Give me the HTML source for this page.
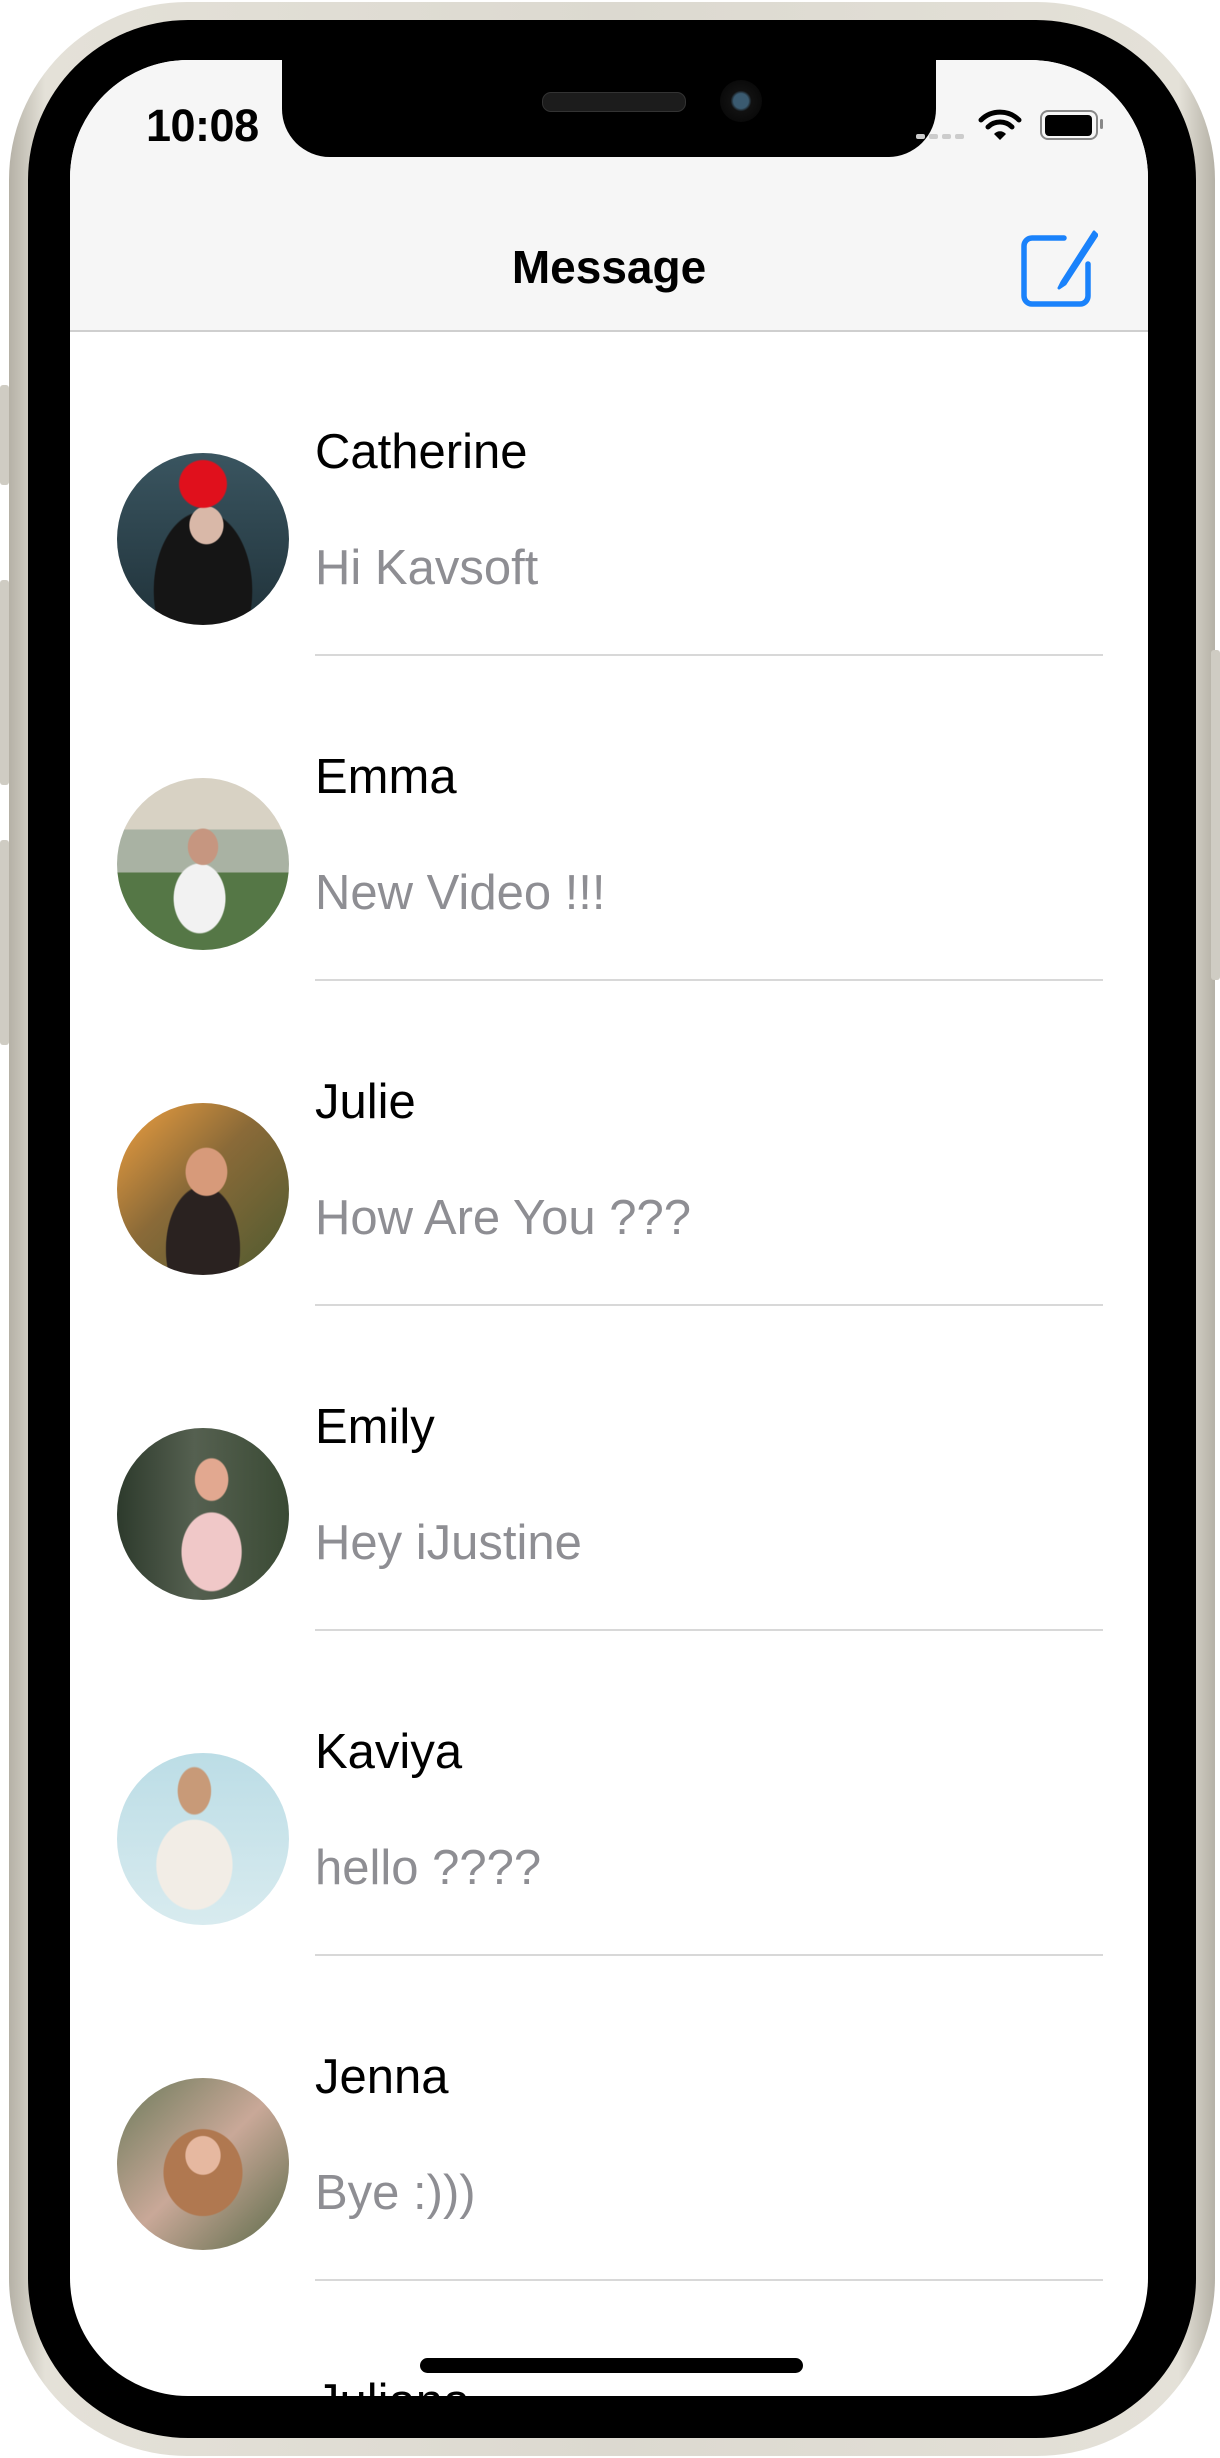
<!DOCTYPE html>
<html><head><meta charset="utf-8"><style>
html,body{margin:0;padding:0;background:#fff;}
body{width:1220px;height:2458px;position:relative;overflow:hidden;font-family:"Liberation Sans",sans-serif;}
.frame{position:absolute;left:9px;top:2px;width:1206px;height:2454px;border-radius:178px;background:linear-gradient(90deg,#b5b1a6,#e4e1d8 3%,#dcd9d0 50%,#e4e1d8 97%,#b5b1a6);}
.bezel{position:absolute;left:28px;top:20px;width:1168px;height:2418px;border-radius:160px;background:#000;}
.screen{position:absolute;left:70px;top:60px;width:1078px;height:2336px;border-radius:118px;background:#fff;overflow:hidden;}
.nav{position:absolute;left:0;top:0;width:100%;height:270px;background:#f6f6f6;border-bottom:2px solid #cfcfcf;}
.notch{position:absolute;left:212px;top:-2px;width:654px;height:99px;background:#000;border-radius:0 0 48px 48px;}
.title{position:absolute;left:0;width:100%;top:180px;text-align:center;font-size:46px;font-weight:bold;color:#000;}
.time{position:absolute;left:76px;top:40px;font-size:45px;font-weight:bold;color:#000;letter-spacing:-0.5px;}
.row{position:absolute;left:0;width:100%;height:325px;}
.av{position:absolute;left:47px;width:172px;height:172px;border-radius:50%;}
.name{position:absolute;left:245px;font-size:49px;color:#000;}
.msg{position:absolute;left:245px;font-size:49px;color:#8e8e93;}
.sep{position:absolute;left:245px;width:788px;height:2px;background:#d8d8d8;}
.home{position:absolute;left:350px;top:2298px;width:383px;height:15px;border-radius:8px;background:#000;}
.btn{position:absolute;left:0;width:9px;background:#cfccc3;border-radius:3px;}
</style></head><body>
<div class="frame"></div>
<div class="btn" style="top:385px;height:100px"></div>
<div class="btn" style="top:580px;height:205px"></div>
<div class="btn" style="top:840px;height:205px"></div>
<div class="btn" style="left:1211px;top:650px;height:330px"></div>
<div class="bezel"></div>
<div class="screen">
  <div class="nav"></div>
  <div class="notch"></div>
  <div style="position:absolute;left:472px;top:32px;width:142px;height:18px;border-radius:9px;background:#1c1c1c;border:1px solid #333"></div>
  <div style="position:absolute;left:650px;top:20px;width:42px;height:42px;border-radius:50%;background:radial-gradient(circle,#3a5a70 0 25%,#111 35%,#0a0a0a 70%)"></div>
  <div class="time">10:08</div>
  <div style="position:absolute;left:846px;top:74px;width:48px;height:5px;display:flex;gap:4px">
    <span style="flex:1;background:#ccc;border-radius:2px"></span><span style="flex:1;background:#ccc;border-radius:2px"></span><span style="flex:1;background:#ccc;border-radius:2px"></span><span style="flex:1;background:#ccc;border-radius:2px"></span>
  </div>
  <svg style="position:absolute;left:908px;top:48px" width="44" height="34" viewBox="0 0 44 34">
    <path d="M3 12 A27 27 0 0 1 41 12" stroke="#000" stroke-width="5" fill="none" stroke-linecap="round"/>
    <path d="M10 19 A17 17 0 0 1 34 19" stroke="#000" stroke-width="5" fill="none" stroke-linecap="round"/>
    <path d="M16 26 L22 32 L28 26 A8 8 0 0 0 16 26Z" fill="#000"/>
  </svg>
  <div style="position:absolute;left:970px;top:50px;width:54px;height:26px;border:2.5px solid #888;border-radius:8px;"></div>
  <div style="position:absolute;left:975px;top:55px;width:47px;height:21px;background:#000;border-radius:4px;"></div>
  <div style="position:absolute;left:1030px;top:59px;width:3px;height:10px;background:#888;border-radius:2px;"></div>
  <div class="title">Message</div>
  <svg style="position:absolute;left:948px;top:166px" width="80" height="82" viewBox="0 0 80 82">
    <path d="M46 12 H14 A8 8 0 0 0 6 20 V70 A8 8 0 0 0 14 78 H62 A8 8 0 0 0 70 70 V38" stroke="#1a82fb" stroke-width="5.5" fill="none" stroke-linecap="round"/>
    <path d="M76 6 L44 56 L41 62 L47 58 L79 9Z" fill="#1a82fb" stroke="#1a82fb" stroke-width="3" stroke-linejoin="round"/>
  </svg>

  <div class="row" style="top:0">
    <div class="av" style="top:393px;background:radial-gradient(circle at 50% 18%,#e0101c 0 14%,transparent 15%),radial-gradient(ellipse at 52% 42%,#d9b8a8 0 13%,transparent 14%),radial-gradient(ellipse at 50% 80%,#151515 0 40%,transparent 41%),linear-gradient(#3a5560,#20323a);"></div>
    <div class="name" style="top:364px">Catherine</div>
    <div class="msg" style="top:480px">Hi Kavsoft</div>
    <div class="sep" style="top:594px"></div>
  </div>
  <div class="row" style="top:325px">
    <div class="av" style="top:393px;background:radial-gradient(ellipse at 50% 40%,#c69680 0 12%,transparent 13%),radial-gradient(ellipse at 48% 70%,#f2f2f2 0 20%,transparent 21%),linear-gradient(#d8d2c4 0 30%,#a9b2a3 30% 55%,#557746 55%);"></div>
    <div class="name" style="top:364px">Emma</div>
    <div class="msg" style="top:480px">New Video !!!</div>
    <div class="sep" style="top:594px"></div>
  </div>
  <div class="row" style="top:650px">
    <div class="av" style="top:393px;background:radial-gradient(ellipse at 52% 40%,#d79a7a 0 16%,transparent 17%),radial-gradient(ellipse at 50% 85%,#2a2220 0 30%,transparent 31%),linear-gradient(135deg,#f0a040,#8a6a38 45%,#4d5a30);"></div>
    <div class="name" style="top:364px">Julie</div>
    <div class="msg" style="top:480px">How Are You ???</div>
    <div class="sep" style="top:594px"></div>
  </div>
  <div class="row" style="top:975px">
    <div class="av" style="top:393px;background:radial-gradient(ellipse at 55% 30%,#e2a890 0 12%,transparent 13%),radial-gradient(ellipse at 55% 72%,#f0c8c8 0 22%,transparent 23%),linear-gradient(90deg,#2d3a2c,#556050 45%,#3a4a34);"></div>
    <div class="name" style="top:364px">Emily</div>
    <div class="msg" style="top:480px">Hey iJustine</div>
    <div class="sep" style="top:594px"></div>
  </div>
  <div class="row" style="top:1300px">
    <div class="av" style="top:393px;background:radial-gradient(ellipse at 45% 22%,#c89a78 0 12%,transparent 13%),radial-gradient(ellipse at 45% 65%,#f2ede6 0 28%,transparent 29%),linear-gradient(#bcdde6,#d8ebef);"></div>
    <div class="name" style="top:364px">Kaviya</div>
    <div class="msg" style="top:480px">hello ????</div>
    <div class="sep" style="top:594px"></div>
  </div>
  <div class="row" style="top:1625px">
    <div class="av" style="top:393px;background:radial-gradient(ellipse at 50% 45%,#e6b8a0 0 14%,transparent 15%),radial-gradient(ellipse at 50% 55%,#b07850 0 32%,transparent 33%),linear-gradient(135deg,#6b7a5a,#c9a898 50%,#5a6a48);"></div>
    <div class="name" style="top:364px">Jenna</div>
    <div class="msg" style="top:480px">Bye :)))</div>
    <div class="sep" style="top:594px"></div>
  </div>
  <div class="row" style="top:1950px">
    <div class="name" style="top:364px">Juliana</div>
  </div>
  <div class="home"></div>
</div>
</body></html>
